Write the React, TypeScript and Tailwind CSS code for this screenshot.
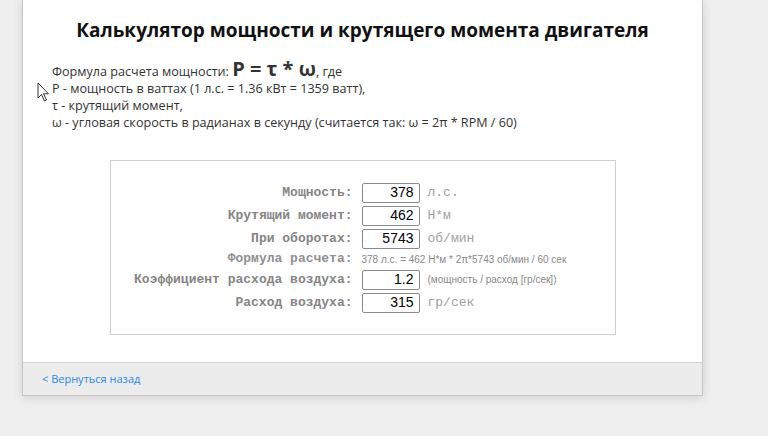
import React from 'react';

const rows = [
  { label: 'Мощность:', value: '378', unit: 'л.с.' },
  { label: 'Крутящий момент:', value: '462', unit: 'Н*м' },
  { label: 'При оборотах:', value: '5743', unit: 'об/мин' },
];

function Cursor() {
  return (
    <svg className="absolute left-[37px] top-[82px]" width="13" height="20" viewBox="0 0 13 20">
      <path d="M1 1 L1 16 L4.5 12.5 L7.5 19 L9.5 18 L6.5 11.8 L11.5 11.8 Z" fill="#fff" stroke="#333" strokeWidth="1" strokeLinejoin="round" />
    </svg>
  );
}

function Field({ label, value, unit, small }: { label: string; value: string; unit: string; small?: boolean }) {
  return (
    <div className="flex items-center h-[23px]">
      <div className="w-[242px] text-right font-['Liberation_Mono',monospace] font-bold text-[13px] text-[#858585]">{label}</div>
      <div className="ml-[9px] w-[58px] h-[20px] border border-[#8a8a8a] rounded-[2px] bg-white flex items-center justify-end pr-[5px] text-[14px] text-black font-['Liberation_Sans',sans-serif]">
        {value}
      </div>
      {small ? (
        <div className="ml-[8px] text-[10px] text-[#888] font-['Liberation_Sans',sans-serif]">{unit}</div>
      ) : (
        <div className="ml-[8px] text-[13px] text-[#a0a0a0] font-['Liberation_Mono',monospace]">{unit}</div>
      )}
    </div>
  );
}

export default function App() {
  return (
    <div className="relative w-[768px] h-[436px] overflow-hidden bg-[#efefef] font-['Open_Sans',sans-serif]">
      <div className="ml-[22px] w-[681px] bg-white border border-t-0 border-[#c6c6c6] shadow-[0_2px_10px_rgba(0,0,0,0.12)]">
        <div className="px-[29px] pt-[16px] pb-[27px]">
          <h1 className="text-center text-[19px] leading-[28px] font-bold text-[#111]">
            Калькулятор мощности и крутящего момента двигателя
          </h1>
          <div className="mt-[16px] text-[12.6px] leading-[17px] text-[#333]">
            <div>
              Формула расчета мощности: <b className="text-[20px] leading-[17px]">P = τ * ω</b>, где
            </div>
            <div>P - мощность в ваттах (1 л.с. = 1.36 кВт = 1359 ватт),</div>
            <div>τ - крутящий момент,</div>
            <div>ω - угловая скорость в радианах в секунду (считается так: ω = 2π * RPM / 60)</div>
          </div>
          <div className="mx-auto mt-[29px] w-[506px] border border-[#cfcfcf] pt-[20px] pb-[20px]">
            {rows.map((r) => (
              <Field key={r.label} {...r} />
            ))}
            <div className="flex items-center h-[18px]">
              <div className="w-[242px] text-right font-['Liberation_Mono',monospace] font-bold text-[13px] text-[#909090]">
                Формула расчета:
              </div>
              <div className="ml-[9px] text-[10px] text-[#888] font-['Liberation_Sans',sans-serif]">
                378 л.с. = 462 Н*м * 2π*5743 об/мин / 60 сек
              </div>
            </div>
            <Field label="Коэффициент расхода воздуха:" value="1.2" unit="(мощность / расход [гр/сек])" small />
            <Field label="Расход воздуха:" value="315" unit="гр/сек" />
          </div>
        </div>
        <div className="h-[33px] bg-[#ececec] border-t border-[#cfcfcf] px-[19px] flex items-center">
          <a href="#" className="text-[11px] text-[#2a86e8]">
            &lt; Вернуться назад
          </a>
        </div>
      </div>
      <Cursor />
    </div>
  );
}
